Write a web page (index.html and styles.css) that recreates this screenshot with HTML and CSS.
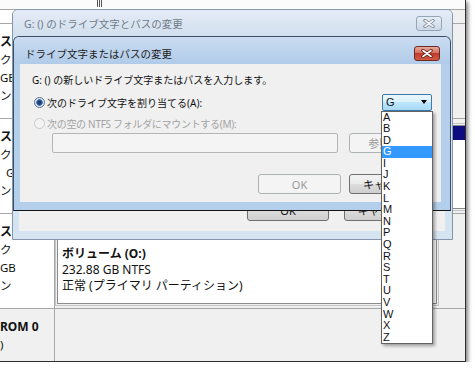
FILE: index.html
```html
<!DOCTYPE html>
<html lang="ja">

<head>
    <meta charset="UTF-8">
    <title>ドライブ文字とパスの変更</title>
    <link rel="stylesheet" href="styles.css">
</head>

<body>
    <div class="screen">
        <div class="top-strip"><span class="grip"></span></div>
        <div class="disk-gap"></div>

        <div class="disk">
            <div class="disk-label"><b>ス</b><br>ク<br>GB<br>ン</div>
            <div class="disk-parts"></div>
        </div>
        <div class="disk">
            <div class="disk-label"><b>ス</b><br>ク<br><span class="shift">G</span><br>ン</div>
            <div class="disk-parts">
                <div class="volume volume-wide"><div class="volume-bar"></div></div>
            </div>
        </div>
        <div class="disk">
            <div class="disk-label"><b>ス</b><br>ク<br>GB<br>ン</div>
            <div class="disk-parts">
                <div class="volume">
                    <div class="volume-bar"></div>
                    <div class="volume-text">
                        <b>ボリューム (O:)</b><br>
                        232.88 GB NTFS<br>
                        正常 (プライマリ パーティション)
                    </div>
                </div>
            </div>
        </div>
        <div class="disk disk-cd">
            <div class="disk-label"><b>ROM 0</b><br>)</div>
            <div class="disk-parts"></div>
        </div>

        <!-- dialog behind -->
        <div class="window window-back">
            <div class="titlebar">
                <span>G: () のドライブ文字とパスの変更</span>
                <span class="close close-off">
                    <svg width="12" height="9" viewBox="0 0 12 9">
                        <path class="x-edge" d="M2 1.5 L10 7.5 M10 1.5 L2 7.5" />
                        <path class="x-fill" d="M2 1.5 L10 7.5 M10 1.5 L2 7.5" />
                    </svg>
                </span>
            </div>
            <div class="client client-back">
                <div class="button-row">
                    <button class="btn">OK</button>
                    <button class="btn">キャンセル</button>
                </div>
            </div>
        </div>

        <!-- active dialog -->
        <div class="window window-front">
            <div class="titlebar">
                <span>ドライブ文字またはパスの変更</span>
                <span class="close close-on">
                    <svg width="12" height="9" viewBox="0 0 12 9">
                        <path class="x-edge" d="M2 1.5 L10 7.5 M10 1.5 L2 7.5" />
                        <path class="x-fill" d="M2 1.5 L10 7.5 M10 1.5 L2 7.5" />
                    </svg>
                </span>
            </div>
            <div class="client client-front">
                <p class="intro">G: () の新しいドライブ文字またはパスを入力します。</p>
                <div class="option">
                    <label class="radio-label"><span class="radio radio-on"></span>次のドライブ文字を割り当てる(A):</label>
                    <div class="combo">
                        <span>G</span><span class="combo-arrow"></span>
                        <ul class="combo-list">
                            <li>A</li>
                            <li>B</li>
                            <li>D</li>
                            <li class="selected">G</li>
                            <li>I</li>
                            <li>J</li>
                            <li>K</li>
                            <li>L</li>
                            <li>M</li>
                            <li>N</li>
                            <li>P</li>
                            <li>Q</li>
                            <li>R</li>
                            <li>S</li>
                            <li>T</li>
                            <li>U</li>
                            <li>V</li>
                            <li>W</li>
                            <li>X</li>
                            <li>Z</li>
                        </ul>
                    </div>
                </div>
                <div class="option option-off">
                    <label class="radio-label"><span class="radio"></span>次の空の NTFS フォルダにマウントする(M):</label>
                </div>
                <div class="path-row">
                    <div class="path-field"></div>
                    <button class="btn" disabled>参照(R)...</button>
                </div>
                <div class="button-row">
                    <button class="btn" disabled>OK</button>
                    <button class="btn">キャンセル</button>
                </div>
            </div>
        </div>
    </div>
</body>
</html>
```

FILE: styles.css
```css
body {
    margin: 0;
    background: #fff;
    font-family: "Noto Sans", "Noto Sans CJK JP", sans-serif;
    color: #111;
}

.screen {
    position: relative;
    width: 465px;
    height: 361px;
    overflow: hidden;
    background: #f0f0f0;
    border-right: 1px solid #2e2e2e;
    border-bottom: 1px solid #2e2e2e;
    box-shadow: 2px 2px 4px rgba(0, 0, 0, 0.5);
}

/* background: disk management */
.top-strip {
    display: flex;
    height: 9px;
    background: #fbfbfb;
    border-bottom: 1px solid #a7a7a7;
}

.grip {
    margin-left: 97px;
    width: 6px;
    height: 7px;
    background: repeating-linear-gradient(90deg, #555 0 1px, transparent 1px 2px);
}

.disk-gap {
    height: 13px;
    background: linear-gradient(90deg, #fff 55px, #f0f0f0 55px);
    border-bottom: 1px solid #a7a7a7;
}

.disk {
    display: flex;
    height: 94px;
    border-bottom: 1px solid #a7a7a7;
}

.disk-label {
    box-sizing: border-box;
    flex: none;
    width: 55px;
    padding-top: 9px;
    background: #fff;
    border-right: 1px solid #a7a7a7;
    font-size: 11.5px;
    line-height: 18px;
    white-space: nowrap;
    overflow: hidden;
}

.disk-label b {
    font-size: 12px;
}

.shift {
    margin-left: 6px;
}

.disk-cd .disk-label {
    background: #f0f0f0;
}

.disk-parts {
    flex: 1;
    min-width: 0;
    padding: 6px 0 0 2px;
}

.volume {
    box-sizing: border-box;
    width: 380px;
    height: 84px;
    background: #fff;
    border: 1px solid #8c8c8c;
    outline: 1px solid #c4c4c4;
    outline-offset: 1px;
}

.volume-wide {
    width: 430px;
}

.volume-bar {
    height: 14px;
    background: #0d0d80;
}

.volume-text {
    padding: 11px 0 0 4px;
    font-size: 12px;
    line-height: 16px;
    white-space: nowrap;
}

/* dialogs */
.window {
    position: absolute;
    box-sizing: border-box;
    display: flex;
    flex-direction: column;
    border: 1px solid;
    border-radius: 6px 6px 0 0;
}

.window-back {
    left: 12px;
    top: 9px;
    width: 441px;
    height: 231px;
    background: #d6e3f1;
    border-color: #8596ab;
}

.window-front {
    left: 13px;
    top: 36px;
    width: 438px;
    height: 175px;
    background: #b3cfec;
    border-color: #3a4f66;
    border-bottom-color: #151515;
}

.titlebar {
    box-sizing: border-box;
    display: flex;
    align-items: center;
    justify-content: space-between;
    height: 26px;
    padding: 0 10px 0 11px;
    font-size: 10.5px;
    border-radius: 5px 5px 0 0;
}

.window-back .titlebar {
    background: linear-gradient(#e4ecf6, #d2dfee);
    color: #6f7b88;
}

.window-front .titlebar {
    height: 27px;
    padding-top: 5px;
    background: linear-gradient(#cadcf1, #b0cbe9);
    color: #1c1c1c;
}

.close {
    box-sizing: border-box;
    display: flex;
    align-items: center;
    justify-content: center;
    width: 26px;
    height: 15px;
    border: 1px solid;
    border-radius: 3px;
}

.close svg {
    fill: none;
    stroke-linecap: round;
}

.close-off {
    background: linear-gradient(#e6edf5, #cbd8e6);
    border-color: #95a5b8;
}

.close-off .x-edge {
    stroke: #7b8999;
    stroke-width: 3.4;
}

.close-off .x-fill {
    stroke: #f3f6fa;
    stroke-width: 1.6;
}

.close-on {
    background: linear-gradient(#e8a89e, #d46e5e 45%, #bf3a2c 50%, #d35a43);
    border-color: #6b2a22;
}

.close-on .x-edge {
    stroke: #5a1c15;
    stroke-width: 3.4;
}

.close-on .x-fill {
    stroke: #fff;
    stroke-width: 1.6;
}

.client {
    flex: 1;
    box-sizing: border-box;
    background: #f0f0f0;
}

.client-back {
    display: flex;
    flex-direction: column;
    justify-content: flex-end;
    margin: 0 7px 8px 6px;
    padding: 0 19px 10px 0;
}

.client-back .button-row {
    gap: 15px;
    margin-top: 0;
}

.client-back .btn {
    width: 82px;
    height: 22px;
}

.client-front {
    margin: 0 9px 8px 6px;
    padding: 8px 9px 7px 12px;
    font-size: 10px;
}

.intro {
    margin: 0;
    line-height: 16px;
    white-space: nowrap;
}

.option {
    display: flex;
    align-items: center;
    justify-content: space-between;
    height: 20px;
    margin-top: 4px;
    padding-left: 2px;
}

.option-off {
    margin-top: 1px;
    color: #a3a3a3;
}

.radio-label {
    display: flex;
    align-items: center;
    white-space: nowrap;
}

.option-off .radio-label {
    letter-spacing: -0.3px;
}

.radio {
    box-sizing: border-box;
    width: 11px;
    height: 11px;
    margin-right: 2px;
    border: 1px solid #c9c9c9;
    border-radius: 50%;
    background: #f3f3f3;
}

.radio-on {
    border-color: #5b6f86;
    background: radial-gradient(circle, #243f70 0 1.8px, #3f7bc2 3px, #dbe5ef 3.6px, #f7f9fb 100%);
}

.combo {
    position: relative;
    box-sizing: border-box;
    display: flex;
    align-items: center;
    justify-content: space-between;
    width: 50px;
    height: 17px;
    padding: 0 4px 0 3px;
    border: 1px solid #3c7aab;
    border-radius: 2px;
    background: linear-gradient(#eaf6fd, #d9f0fc 50%, #bee6fd 50%, #a7d9f5);
    font: 11px "Liberation Sans", sans-serif;
    color: #111;
}

.combo-arrow {
    width: 0;
    height: 0;
    border-left: 3.5px solid transparent;
    border-right: 3.5px solid transparent;
    border-top: 4px solid #000;
}

.combo-list {
    position: absolute;
    top: calc(100% + 1px);
    left: -2px;
    box-sizing: border-box;
    width: 52px;
    margin: 0;
    padding: 0;
    list-style: none;
    background: #fff;
    border: 1px solid #646464;
    box-shadow: 2px 2px 3px rgba(0, 0, 0, 0.35);
    font: 11px/11.6px "Liberation Sans", sans-serif;
    color: #111;
}

.combo-list li {
    height: 11.6px;
    padding-left: 1px;
}

.combo-list .selected {
    background: #3399ff;
    color: #fff;
}

.path-row {
    display: flex;
    gap: 11px;
    padding-left: 20px;
}

.path-field {
    box-sizing: border-box;
    width: 286px;
    height: 20px;
    border: 1px solid #b5b5b5;
    border-radius: 2px;
    background: #f4f4f4;
}

.button-row {
    display: flex;
    justify-content: flex-end;
    gap: 8px;
    margin-top: 21px;
}

.btn {
    box-sizing: border-box;
    width: 83px;
    height: 20px;
    padding: 0;
    border: 1px solid #707070;
    border-radius: 3px;
    background: linear-gradient(#f2f2f2, #ebebeb 50%, #dddddd 50%, #cfcfcf);
    font: 11px "Noto Sans", "Noto Sans CJK JP", sans-serif;
    color: #111;
}

.btn:disabled {
    border-color: #adb2b5;
    background: #f4f4f4;
    color: #9a9a9a;
}
```
